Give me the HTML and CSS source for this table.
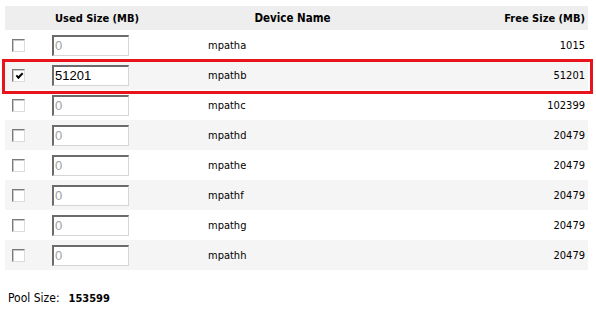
FILE: index.html
```html
<!DOCTYPE html>
<html>
<head>
<meta charset="utf-8">
<link rel="stylesheet" href="styles.css">
</head>
<body>
<div class="page">
  <div class="grid-wrap">
    <table class="grid">
      <colgroup>
        <col class="c-check"><col class="c-used"><col class="c-name"><col class="c-free">
      </colgroup>
      <thead>
        <tr>
          <th></th>
          <th class="h-used">Used Size (MB)</th>
          <th class="h-name">Device Name</th>
          <th class="h-free">Free Size (MB)</th>
        </tr>
      </thead>
      <tbody>
        <tr><td><input type="checkbox" class="cb"></td><td><input type="text" class="num" placeholder="0"></td><td class="name">mpatha</td><td class="free">1015</td></tr>
        <tr class="alt"><td><input type="checkbox" class="cb" checked></td><td><input type="text" class="num" value="51201"></td><td class="name">mpathb</td><td class="free">51201</td></tr>
        <tr><td><input type="checkbox" class="cb"></td><td><input type="text" class="num" placeholder="0"></td><td class="name">mpathc</td><td class="free">102399</td></tr>
        <tr class="alt"><td><input type="checkbox" class="cb"></td><td><input type="text" class="num" placeholder="0"></td><td class="name">mpathd</td><td class="free">20479</td></tr>
        <tr><td><input type="checkbox" class="cb"></td><td><input type="text" class="num" placeholder="0"></td><td class="name">mpathe</td><td class="free">20479</td></tr>
        <tr class="alt"><td><input type="checkbox" class="cb"></td><td><input type="text" class="num" placeholder="0"></td><td class="name">mpathf</td><td class="free">20479</td></tr>
        <tr><td><input type="checkbox" class="cb"></td><td><input type="text" class="num" placeholder="0"></td><td class="name">mpathg</td><td class="free">20479</td></tr>
        <tr class="alt"><td><input type="checkbox" class="cb"></td><td><input type="text" class="num" placeholder="0"></td><td class="name">mpathh</td><td class="free">20479</td></tr>
      </tbody>
    </table>
    <div class="highlight"></div>
  </div>
  <div class="pool"><span class="pool-label">Pool Size:</span><span class="pool-value">153599</span></div>
</div>
</body>
</html>
```

FILE: styles.css
```css
html, body {
  margin: 0;
  padding: 0;
  background: #ffffff;
}
body {
  font-family: "DejaVu Sans Condensed", "DejaVu Sans", sans-serif;
  font-stretch: condensed;
  font-size: 11px;
  color: #000;
}
.page {
  padding: 6px 0 0 5px;
}
.grid-wrap {
  position: relative;
  width: 583px;
}
.grid {
  width: 583px;
  border-collapse: collapse;
  table-layout: fixed;
}
.c-check { width: 43px; }
.c-used { width: 153px; }
.c-name { width: 183px; }
.c-free { width: 204px; }

.grid thead tr {
  background: #eeeeee;
  height: 24px;
}
.grid th {
  font-weight: bold;
  padding: 0 4px;
  height: 24px;
  vertical-align: middle;
  white-space: nowrap;
}
.h-used { text-align: left; padding-left: 7px !important; }
.h-name { text-align: center; font-size: 11.5px; }
.h-free { text-align: right; padding-right: 3px !important; }

.grid tbody tr { height: 30px; }
.grid tbody tr.alt { background: #f5f5f5; }
.grid td {
  padding: 0;
  height: 30px;
  vertical-align: middle;
}
.grid td.name { padding-left: 7px; }
.grid td.free { text-align: right; padding-right: 3px; }

.cb {
  appearance: none;
  -webkit-appearance: none;
  display: block;
  box-sizing: border-box;
  width: 13px;
  height: 13px;
  margin: 1px 0 0 7px;
  background: #fff;
  border-top: 1px solid #7a7a7a;
  border-left: 1px solid #7a7a7a;
  border-right: 1px solid #dcdcdc;
  border-bottom: 1px solid #dcdcdc;
  box-shadow: inset 1px 1px 0 #c8c8c8;
  position: relative;
}
.cb:checked::after {
  content: "";
  position: absolute;
  left: 3px;
  top: 3px;
  width: 5px;
  height: 2px;
  border-left: 2px solid #000;
  border-bottom: 2px solid #000;
  transform: rotate(-45deg);
  transform-origin: center;
}
.num {
  display: block;
  box-sizing: border-box;
  width: 77px;
  height: 21px;
  margin: 0 0 0 4px;
  padding: 0 0 0 1px;
  font-family: "Liberation Sans", Arial, sans-serif;
  font-size: 13px;
  color: #000;
  background: #fff;
  border-top: 2px solid #6b6b6b;
  border-left: 2px solid #6b6b6b;
  border-right: 1px solid #d6d6d6;
  border-bottom: 1px solid #d6d6d6;
  outline: none;
}
.num::placeholder { color: #a0a0a0; }

.highlight {
  position: absolute;
  left: -3px;
  top: 53px;
  width: 585px;
  height: 29px;
  border: 3px solid #e8141c;
  pointer-events: none;
}

.pool {
  margin-top: 21px;
  padding-left: 3px;
  display: flex;
  align-items: baseline;
  gap: 9px;
}
.pool-label { font-size: 12px; }
.pool-value { font-weight: bold; }
```
